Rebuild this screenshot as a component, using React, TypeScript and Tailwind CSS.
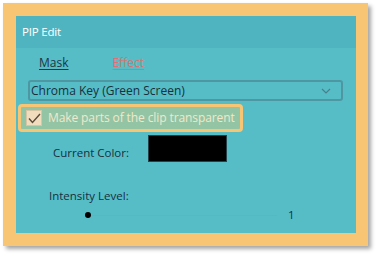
import React from "react";

export default function App() {
  return (
    <div className="w-[380px] h-[258px] bg-white" style={{ fontFamily: '"Open Sans", "Noto Sans", sans-serif' }}>
      <div className="absolute left-[3px] top-[3px] w-[365px] h-[243px] bg-[#f8c574] p-[13px] shadow-[3px_3px_4px_rgba(0,0,0,0.35)]">
        <div className="w-[340px] h-[217px] bg-[#56bdc7] flex flex-col">
          <div className="h-[32px] bg-[#4fb4bf] flex items-center pl-[6px] text-[11.5px] text-white tracking-[-0.2px]">
            PIP Edit
          </div>
          <div className="flex items-center h-[30px] text-[12px] pl-[23px]">
            <span className="underline text-[#1d3543] underline-offset-2">Mask</span>
            <span className="underline text-[#e07070] ml-[44px] underline-offset-2">Effect</span>
          </div>
          <div className="ml-[12px] mt-[2px] w-[315px] h-[21px] border-2 border-[#4e97a2] rounded-[3px] flex items-center justify-between pl-[1px] pr-[10px] text-[12px] text-[#16303d]">
            <span>Chroma Key (Green Screen)</span>
            <svg width="10" height="6" viewBox="0 0 10 6">
              <path d="M1 1 L5 5 L9 1" fill="none" stroke="#4a7f8a" strokeWidth="1.2" />
            </svg>
          </div>
          <div className="ml-[2px] mt-[3px] w-[225px] h-[28px] border-[3px] border-[#f8c574] rounded-[4px] bg-[#93c4a4] flex items-center pl-[5px]">
            <div className="w-[16px] h-[16px] bg-[#f1dcbe] border border-[#d9c4a4] flex items-center justify-center">
              <svg width="13" height="11" viewBox="0 0 13 11">
                <path d="M1 5.5 L4.5 9.5 L12 1" fill="none" stroke="#5a4a3a" strokeWidth="1.4" />
              </svg>
            </div>
            <span className="ml-[6px] text-[12px] text-[#efe9cd] tracking-[-0.1px]">Make parts of the clip transparent</span>
          </div>
          <div className="flex items-start mt-[3px] h-[27px]">
            <span className="ml-[37px] mt-[10px] text-[11.5px] leading-[16px] text-[#16303d] w-[95px]">Current Color:</span>
            <div className="w-[79px] h-[27px] bg-black border border-[#24424a]" />
          </div>
          <div className="ml-[33px] mt-[26px] text-[11.5px] text-[#16303d] leading-[16px]">Intensity Level:</div>
          <div className="flex items-center mt-[5px] h-[12px]">
            <div className="ml-[69px] w-[6px] h-[6px] rounded-full bg-black" />
            <div className="w-[186px] h-px bg-[#7fa7ad]" />
            <span className="ml-[11px] text-[11.5px] text-[#16303d]">1</span>
          </div>
        </div>
      </div>
    </div>
  );
}
